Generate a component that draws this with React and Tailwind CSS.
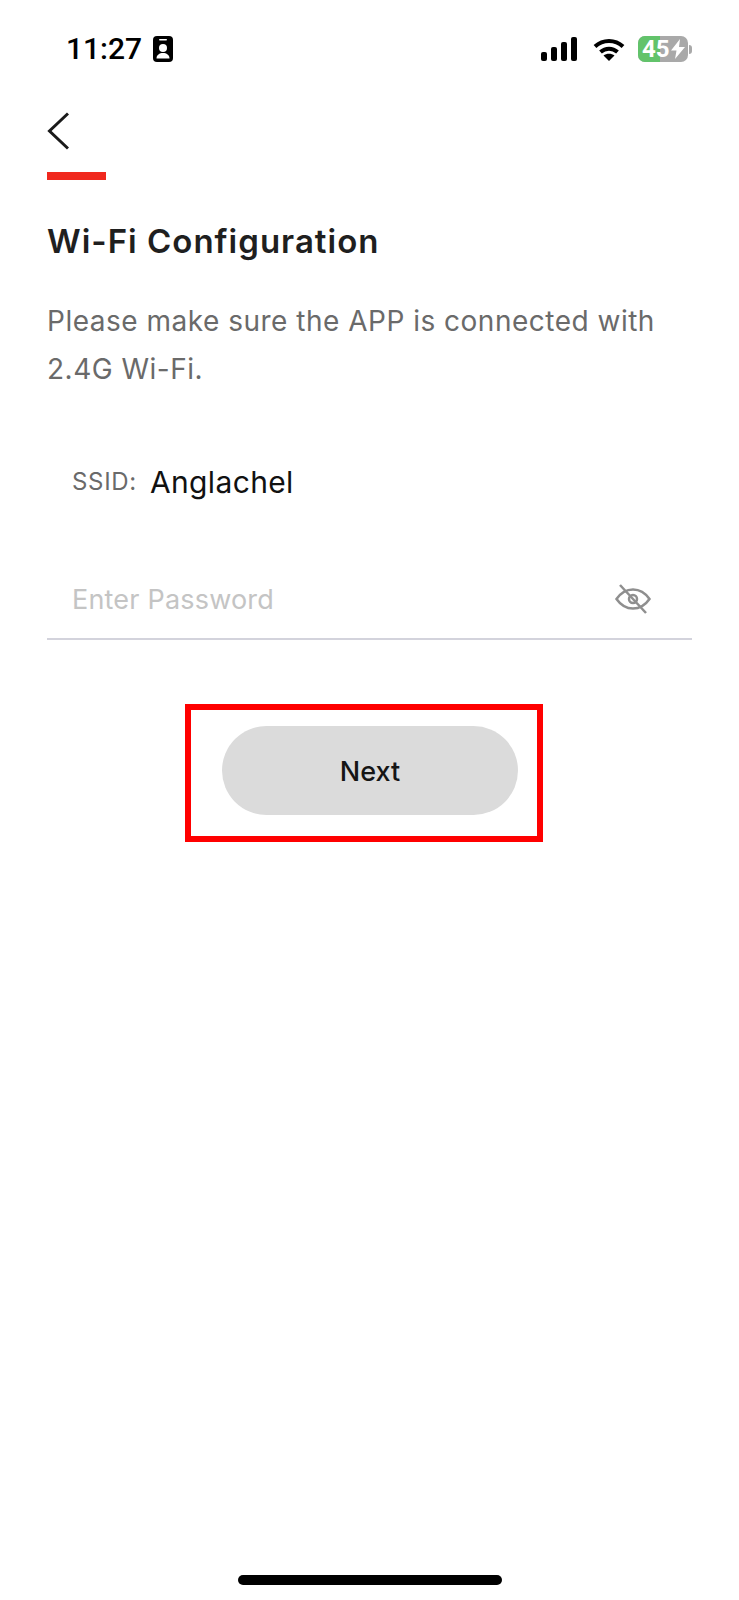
const bodyFont = { fontFamily: 'Inter, sans-serif' };

function StatusBar() {
  return (
    <div className="flex h-[100px] items-start justify-between pl-[66px] pr-[47px] pt-[36px]">
      <div className="flex items-center gap-[11px]">
        <span className="font-['Roboto',sans-serif] text-[30px] leading-[26px] font-medium text-black">11:27</span>
        <svg width="20" height="26" viewBox="0 0 20 26">
          <rect width="20" height="26" rx="4" fill="#000" />
          <rect x="6" y="3" width="8" height="1.6" rx="0.8" fill="#fff" />
          <circle cx="10" cy="12" r="4" fill="#fff" />
          <path d="M3.5 22.5c0-3.6 3-5.5 6.500-5.500s6.500 1.900 6.500 5.500z" fill="#fff" />
        </svg>
      </div>
      <div className="flex items-center">
        <svg width="36" height="25" viewBox="0 0 36 25" fill="#000">
          <rect x="0" y="15" width="6" height="9" rx="2" />
          <rect x="10" y="10" width="6" height="14" rx="2" />
          <rect x="20" y="5" width="6" height="19" rx="2" />
          <rect x="30" y="0" width="6" height="24" rx="2" />
        </svg>
        <svg className="ml-[16px]" width="32" height="25" viewBox="0 0 32 25" fill="none" stroke="#000" strokeWidth="4">
          <path d="M2 9.500C10 2 22 2 30 9.500" />
          <path d="M7.500 15C12.500 10.500 19.500 10.500 24.500 15" />
          <path d="M16 24l-5.500-5.500c3-2.500 8-2.500 11 0z" fill="#000" stroke="none" />
        </svg>
        <div className="relative ml-[13px] flex h-[26px] w-[50px] items-center overflow-hidden rounded-[7px] bg-[#a9a9a9]">
          <div className="h-full w-[22px] bg-[#62c36b]" />
          <span className="absolute left-[4px] font-['Roboto',sans-serif] text-[24px] leading-[26px] font-bold text-white">45</span>
          <svg className="absolute right-[3px]" width="14" height="20" viewBox="0 0 14 20" fill="#fff">
            <path d="M9 0L0 11.500h5.500L4 20l10-12H8z" />
          </svg>
        </div>
        <div className="ml-[1px] h-[9px] w-[3px] rounded-r-full bg-[#a9a9a9]" />
      </div>
    </div>
  );
}

function EyeOffIcon() {
  return (
    <svg className="mt-[4px]" width="36" height="30" viewBox="0 0 36 30" fill="none" stroke="#8f8f8f" strokeWidth="2.500">
      <path d="M1.500 15C6 8.500 11.500 5.500 18 5.500S30 8.500 34.500 15C30 21.500 24.500 24.500 18 24.500S6 21.500 1.500 15z" />
      <circle cx="18" cy="15" r="4" />
      <path d="M5 1l26 28" />
    </svg>
  );
}

export default function App() {
  return (
    <div className="flex h-[1600px] w-[739px] flex-col bg-white" style={bodyFont}>
      <StatusBar />

      <div className="px-[47px]">
        <svg className="mt-[12px] block" width="22" height="38" viewBox="0 0 22 38" fill="none" stroke="#1a1a1a" strokeWidth="3">
          <path d="M21 1.500L2.500 19 21 36.500" />
        </svg>
        <div className="mt-[22px] h-[8px] w-[59px] bg-[#f0281e]" />

        <h1 className="mt-[39px] text-[33px] leading-[44px] font-semibold tracking-[1px] text-[#1f1f1f]">Wi-Fi Configuration</h1>
        <p className="mt-[34px] text-[28px] leading-[48px] tracking-[0.5px] text-[#6a6a6a]">
          Please make sure the APP is connected with
          <br />
          2.4G Wi-Fi.
        </p>

        <div className="mt-[69px] flex items-center pl-[25px]">
          <span className="text-[24px] leading-[40px] tracking-[0.7px] text-[#6a6a6a]">SSID:</span>
          <span className="ml-[13px] text-[30px] leading-[40px] tracking-[0.35px] text-[#111111]">Anglachel</span>
        </div>

        <div className="mt-[78px] flex h-[60px] items-start justify-between border-b-2 border-[#d3d3dc] pl-[25px] pr-[41px]">
          <span className="text-[27px] leading-[40px] tracking-[0.2px] text-[#c4c4c4]">Enter Password</span>
          <EyeOffIcon />
        </div>
      </div>

      <div className="mt-[64px] pl-[185px]">
        <div className="flex h-[138px] w-[358px] items-center border-[6px] border-[#ff0000] pb-[5px] pl-[31px]">
          <button type="button" className="h-[89px] w-[296px] rounded-full bg-[#dbdbdb] pt-[3px] text-[27px] font-medium text-[#151515]">
            Next
          </button>
        </div>
      </div>

      <div className="mt-auto mb-[15px] h-[10px] w-[264px] self-center rounded-full bg-black" />
    </div>
  );
}
